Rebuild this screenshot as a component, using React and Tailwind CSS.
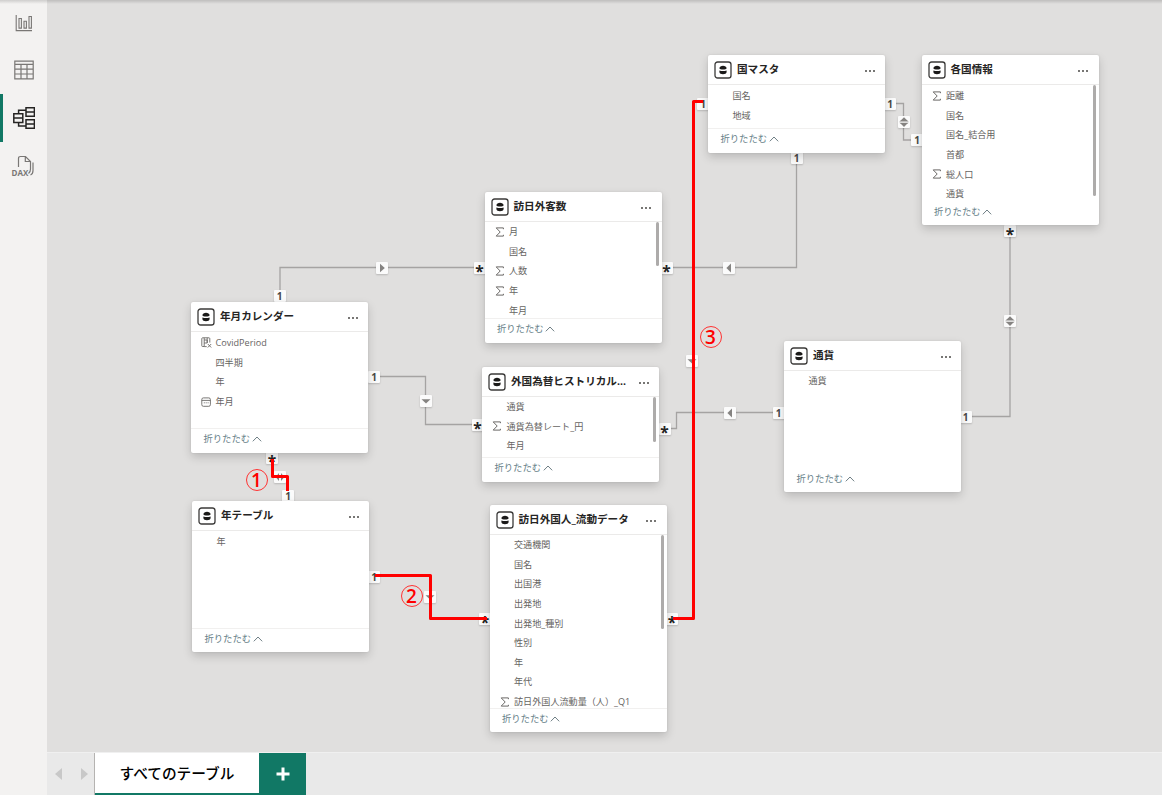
const TABLES = [
  {
    name: "国マスタ",
    box: "left-[661px] top-[55px] w-[177px] h-[98px]",
    footer: "h-[25px] pb-[4px] border-t border-[#f1f0ef]",
    fields: [{ label: "国名" }, { label: "地域" }],
  },
  {
    name: "各国情報",
    box: "left-[874.5px] top-[55px] w-[177px] h-[170px]",
    footer: "h-[22px] pb-[5px]",
    scroll: "h-[111px]",
    fields: [
      { label: "距離", icon: "sigma" },
      { label: "国名" },
      { label: "国名_結合用" },
      { label: "首都" },
      { label: "総人口", icon: "sigma" },
      { label: "通貨" },
    ],
  },
  {
    name: "訪日外客数",
    box: "left-[437.5px] top-[192px] w-[177px] h-[151px]",
    footer: "h-[25px] pb-[4px] border-t border-[#f1f0ef]",
    scroll: "h-[44px]",
    list: "-mt-[1px]",
    fields: [
      { label: "月", icon: "sigma" },
      { label: "国名" },
      { label: "人数", icon: "sigma" },
      { label: "年", icon: "sigma" },
      { label: "年月" },
    ],
  },
  {
    name: "年月カレンダー",
    box: "left-[144px] top-[302px] w-[177px] h-[151px]",
    footer: "h-[25px] pb-[4px] border-t border-[#f1f0ef]",
    fields: [
      { label: "CovidPeriod", icon: "group" },
      { label: "四半期" },
      { label: "年" },
      { label: "年月", icon: "calendar" },
    ],
  },
  {
    name: "外国為替ヒストリカル...",
    box: "left-[435px] top-[367px] w-[177px] h-[115px]",
    footer: "h-[25px] pb-[4px] border-t border-[#f1f0ef]",
    scroll: "h-[45px]",
    list: "-mt-[1px]",
    fields: [
      { label: "通貨" },
      { label: "通貨為替レート_円", icon: "sigma" },
      { label: "年月" },
    ],
  },
  {
    name: "通貨",
    box: "left-[737px] top-[341px] w-[177px] h-[151px]",
    footer: "h-[24px] pb-[3px]",
    list: "-mt-[1px]",
    fields: [{ label: "通貨" }],
  },
  {
    name: "年テーブル",
    box: "left-[145px] top-[501px] w-[177px] h-[151px]",
    footer: "h-[24px] pb-[3px] border-t border-[#f1f0ef]",
    fields: [{ label: "年" }],
  },
  {
    name: "訪日外国人_流動データ",
    box: "left-[442.5px] top-[505px] w-[177px] h-[227px]",
    footer: "h-[24px] pb-[4px] border-t border-[#f1f0ef]",
    scroll: "h-[94px]",
    list: "-mt-[1px]",
    fields: [
      { label: "交通機関" },
      { label: "国名" },
      { label: "出国港" },
      { label: "出発地" },
      { label: "出発地_種別" },
      { label: "性別" },
      { label: "年" },
      { label: "年代" },
      { label: "訪日外国人流動量（人）_Q1", icon: "sigma" },
    ],
  },
];

// Relationship ends and filter directions
const MARKERS = [
  { kind: "1", pos: "left-[226.5px] top-[290px]" },
  { kind: "right", pos: "left-[329px] top-[262px]" },
  { kind: "*", pos: "left-[426.5px] top-[262px]" },
  { kind: "1", pos: "left-[321px] top-[371px]" },
  { kind: "down", pos: "left-[372.5px] top-[395px]" },
  { kind: "*", pos: "left-[424.5px] top-[419px]" },
  { kind: "*", pos: "left-[219px] top-[452px]" },
  { kind: "both-h", pos: "left-[227px] top-[471px]" },
  { kind: "1", pos: "left-[235px] top-[490px]" },
  { kind: "1", pos: "left-[321px] top-[571px]" },
  { kind: "down", pos: "left-[377px] top-[591px]" },
  { kind: "*", pos: "left-[432px] top-[613px]" },
  { kind: "*", pos: "left-[619px] top-[613px]" },
  { kind: "down", pos: "left-[639px] top-[355px]" },
  { kind: "1", pos: "left-[650px] top-[98px]" },
  { kind: "*", pos: "left-[613.5px] top-[262px]" },
  { kind: "left", pos: "left-[676px] top-[262px]" },
  { kind: "1", pos: "left-[743.5px] top-[152px]" },
  { kind: "*", pos: "left-[611.5px] top-[423px]" },
  { kind: "left", pos: "left-[677px] top-[407px]" },
  { kind: "1", pos: "left-[725.5px] top-[407px]" },
  { kind: "1", pos: "left-[837px] top-[98px]" },
  { kind: "both-v", pos: "left-[850.5px] top-[116px]" },
  { kind: "1", pos: "left-[864px] top-[134px]" },
  { kind: "*", pos: "left-[957px] top-[225px]" },
  { kind: "both-v", pos: "left-[957px] top-[315px]" },
  { kind: "1", pos: "left-[912.5px] top-[411px]" },
];

const ARROWS = {
  right: "M4 1.8v8.4L8.8 6z",
  left: "M8 1.6v8.800L3.4 6z",
  down: "M1.500 4.200h9L6 8.6z",
  "both-v": "M1.300 5.400Q3 4.400 6 1.200 9 4.400 10.700 5.400zM1.300 6.800h9.400Q9 7.800 6 11 3 7.800 1.300 6.800z",
  "both-h": "M5 2v8L1.6 6zM7 2v8L10.400 6z",
};

const Marker = ({ kind, pos }) => (
  <div
    className={`absolute ${pos} w-[12px] h-[12px] bg-[#fbfbfb] rounded-[1px] shadow-[0_1px_2px_rgba(0,0,0,0.18)] flex items-center justify-center`}
  >
    {ARROWS[kind] ? (
      <svg viewBox="0 0 12 12" className="w-[12px] h-[12px]" fill="#858381">
        <path d={ARROWS[kind]} />
      </svg>
    ) : kind === "1" ? (
      <span className="text-[10px] leading-[12px] font-bold text-[#4a4846]">1</span>
    ) : (
      <span className="text-[15.5px] leading-[12px] font-bold text-[#252423] translate-y-[3px]">*</span>
    )}
  </div>
);

const FieldIcon = ({ icon }) => {
  if (icon === "sigma") {
    return (
      <svg viewBox="0 0 10 10" className="w-[10px] h-[10px]" fill="none" stroke="#6b6967" strokeWidth="1">
        <path d="M8.4 2.2V.9H1.2l4 4.1-4 4.1h7.2V7.8" />
      </svg>
    );
  }
  if (icon === "calendar") {
    return (
      <svg viewBox="0 0 10 10" className="w-[10px] h-[10px]" fill="none" stroke="#6b6967" strokeWidth="0.9">
        <rect x="0.8" y="0.9" width="8.6" height="8.4" rx="1.6" />
        <path d="M.8 3.4h8.6M2.8 5.8h1M4.7 5.8h1M6.6 5.8h1" />
      </svg>
    );
  }
  if (icon === "group") {
    return (
      <svg viewBox="0 0 11 11" className="w-[11px] h-[11px] shrink-0" fill="none" stroke="#6b6967" strokeWidth="0.9">
        <path d="M3 9.5H1.5Q.8 9.5.8 8.8V1.6Q.8.8 1.6.8H8q.8 0 .8.8v4M3.2.8v9M3.2 3h3v3h-3M6.2.8v5M3.2 9.6h2.5M6.8 7l3.4 3.5M10.2 7l-3.4 3.5" />
      </svg>
    );
  }
  return null;
};

const TableCard = ({ name, box, fields, footer, scroll, list = "" }) => (
  <div
    className={`absolute ${box} bg-white rounded-[2px] shadow-[0_4px_10px_rgba(0,0,0,0.17),0_0_2px_rgba(0,0,0,0.1)] flex flex-col`}
  >
    <div className="h-[30px] shrink-0 border-b border-[#ebeae9] flex items-center pl-[6px] pr-[10.5px] pt-[1px]">
      <svg viewBox="0 0 18 18" className="w-[18px] h-[18px] shrink-0">
        <rect x="1" y="1" width="16" height="16" rx="2.6" fill="#fff" stroke="#3b3a39" strokeWidth="1.3" />
        <path d="M5.4 7.300C5.400 3.900 12.600 3.900 12.600 7.300 12.600 8.900 5.400 8.900 5.400 7.300z" fill="#1b1a19" />
        <path d="M5.400 9.400q3.600 1.400 7.200 0v1.600c0 3-7.200 3-7.200 0z" fill="#1b1a19" />
      </svg>
      <span className="ml-[5px] flex-1 whitespace-nowrap text-[10.6px] font-bold text-[#252423]">
        {name}
      </span>
      <span className="flex gap-[2px] pt-[1px]">
        <i className="w-[2px] h-[2px] rounded-full bg-[#4a4846]" />
        <i className="w-[2px] h-[2px] rounded-full bg-[#4a4846]" />
        <i className="w-[2px] h-[2px] rounded-full bg-[#4a4846]" />
      </span>
    </div>
    <div className="flex flex-1 min-h-0">
      <ul className={`flex-1 pt-[1px] ${list}`}>
        {fields.map((f) => (
          <li key={f.label} className="h-[19.65px] flex items-center text-[9.1px] text-[#666462] whitespace-nowrap">
            <span className="w-[24.5px] shrink-0 pl-[10px]">
              <FieldIcon icon={f.icon} />
            </span>
            {f.label}
          </li>
        ))}
      </ul>
      {scroll && <div className={`${scroll} w-[3px] mr-[3px] rounded-full bg-[#adabaa]`} />}
    </div>
    <div className={`${footer} shrink-0 flex items-center pl-[12.5px] text-[9.3px] text-[#668088]`}>
      折りたたむ
      <svg viewBox="0 0 10 6" className="ml-[1.5px] w-[10px] h-[6px]" fill="none" stroke="#6f7f85" strokeWidth="1">
        <path d="M.8 5.3 5 1l4.2 4.3" />
      </svg>
    </div>
  </div>
);

const Callout = ({ n, pos }) => (
  <div
    className={`absolute ${pos} w-[22px] h-[22px] rounded-full border border-[#f33] flex items-center justify-center text-[19px] leading-none font-semibold text-[#f00]`}
  >
    {n}
  </div>
);

const Sidebar = () => (
  <nav className="w-[47px] shrink-0 bg-[#f3f2f1] flex flex-col">
    <div className="h-[46px] flex items-center justify-center">
      <svg viewBox="0 0 18 18" className="w-[18px] h-[18px]" fill="none" stroke="#797775" strokeWidth="1.1">
        <path d="M1.2 1v15.6H17" />
        <path d="M4 4.500h2.400v9.600H4zM9 7.200h2.400v6.900H9zM14 2.500h2.400v11.600H14z" />
      </svg>
    </div>
    <div className="h-[48px] flex items-center justify-center">
      <svg viewBox="0 0 20 20" className="w-[20px] h-[20px]" fill="none" stroke="#797775" strokeWidth="1.2">
        <path d="M.8 1.2h18.400v17.600H.8zM.8 4.400h18.400M.8 9.200h18.400M.8 14h18.400M7 4.400v14.400M13 4.400v14.400" />
      </svg>
    </div>
    <div className="h-[48px] flex items-center justify-center border-l-[3px] border-[#117865] pr-[2px]">
      <svg viewBox="0 0 22 22" className="w-[22px] h-[22px] shrink-0" fill="none" stroke="#252423" strokeWidth="1.5">
        <path d="M.8 6.800h9v8.600h-9zM.8 11h9M13 .8h8.400v8.400H13zM13 5h8.400M13 12.800h8.400v8.400H13zM13 17h8.400" />
        <path d="M5.600 6.800V3.300H13M5.600 15.400v3.600H13" />
      </svg>
    </div>
    <div className="h-[48px] flex items-center justify-center">
      <div className="relative w-[22px] h-[22px]">
        <svg viewBox="0 0 22 22" className="w-[22px] h-[22px]" fill="none" stroke="#797775" strokeWidth="1.2">
          <path d="M5.500 12V3.500Q5.500 1.500 7.500 1.500h5l5 5V14q0 3-2 4.500M12.300 1.500v5h5.200M20 7.500v8q0 3.500-2.500 4.500" />
        </svg>
        <span className="absolute -left-[1px] bottom-[1px] text-[8px] leading-[7px] font-bold text-[#797775]">
          DAX
        </span>
      </div>
    </div>
  </nav>
);

const PageTabs = () => (
  <div className="h-[43px] shrink-0 bg-[#e9e9e9] flex border-t border-[#f0f0f0]">
    <div className="w-[48px] flex items-center justify-between pl-[8px] pr-[6px] border-r border-[#b5b3b1]">
      <svg viewBox="0 0 7 12" className="w-[7px] h-[12px]" fill="#c8c8c8">
        <path d="M7 0v12L0 6z" />
      </svg>
      <svg viewBox="0 0 7 12" className="w-[7px] h-[12px]" fill="#c8c8c8">
        <path d="M0 0v12l7-6z" />
      </svg>
    </div>
    <div className="w-[164px] bg-white border-b-[2px] border-[#117865] flex items-center justify-center text-[14.7px] font-medium text-black">
      すべてのテーブル
    </div>
    <div className="w-[47px] bg-[#117865] flex items-center justify-center">
      <svg viewBox="0 0 14 14" className="w-[14px] h-[14px]" stroke="#fff" strokeWidth="3">
        <path d="M7 .5v13M.5 7h13" />
      </svg>
    </div>
  </div>
);

const App = () => (
  <div className="relative w-[1162px] h-[795px] flex overflow-hidden bg-[#e0dfde] font-['Open_Sans','Noto_Sans_CJK_JP',sans-serif]">
    <Sidebar />
    <div className="flex-1 flex flex-col min-w-0">
      <main className="relative flex-1 min-h-0">
        <svg
          viewBox="0 0 1115 752"
          className="absolute inset-0 w-[1115px] h-[752px]"
          fill="none"
          stroke="#a5a3a2"
          strokeWidth="1.3"
        >
          <path d="M233 296V267.500H438" />
          <path d="M321 376.500H378.500V424.500H435" />
          <path d="M615 267.500H749.500V153" />
          <path d="M612 428.500H629.500V412.500H737" />
          <path d="M838 103.500H856.500V140H875" />
          <path d="M963 225V416.500H914" />
        </svg>
        {MARKERS.map((m) => (
          <Marker key={m.pos} {...m} />
        ))}
        {TABLES.map((t) => (
          <TableCard key={t.name} {...t} />
        ))}
        {/* Highlighted relationships */}
        <svg
          viewBox="0 0 1115 752"
          className="absolute inset-0 w-[1115px] h-[752px]"
          fill="none"
          stroke="#ff0000"
          strokeWidth="3"
          strokeLinejoin="round"
        >
          <path d="M225.500 459V476.500H240.500V491" />
          <path d="M328 575.500H383.500V618.500H440" />
          <path d="M626 618.500H646.500V101.500H656" />
        </svg>
        <Callout n={1} pos="left-[198.5px] top-[469px]" />
        <Callout n={2} pos="left-[353.5px] top-[585px]" />
        <Callout n={3} pos="left-[652.5px] top-[326px]" />
      </main>
      <PageTabs />
    </div>
    <div className="absolute inset-x-0 top-0 h-[4px] bg-gradient-to-b from-black/15 to-transparent" />
  </div>
);

export default App;
